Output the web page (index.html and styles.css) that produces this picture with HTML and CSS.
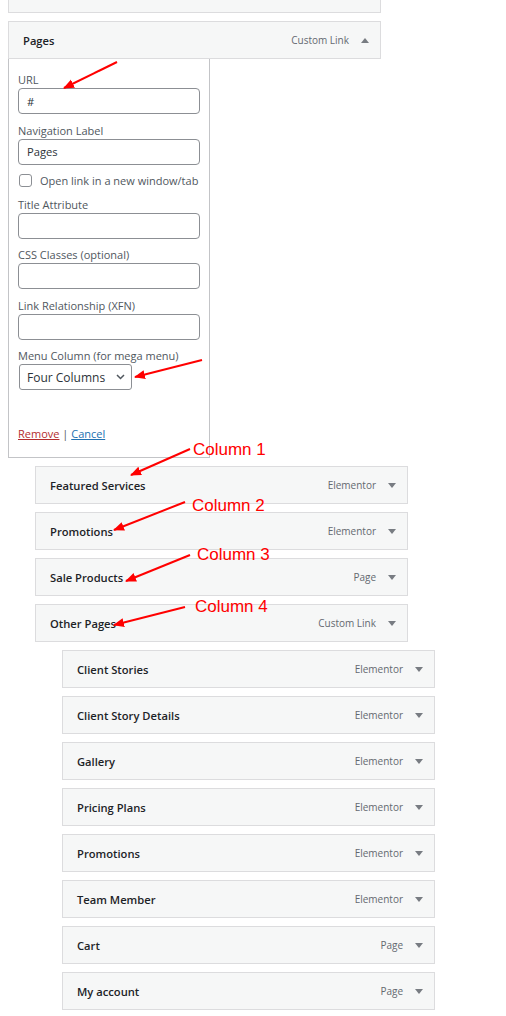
FILE: index.html
```html
<!DOCTYPE html>
<html lang="en">
<head>
  <meta charset="UTF-8">
  <meta name="viewport" content="width=device-width, initial-scale=1.0">
  <title>Menu Structure</title>
  <link rel="stylesheet" href="styles.css">
</head>
<body>

  <ul class="menu">
    <!-- bottom of the item above, scrolled out of view -->
    <li class="item cut"><div class="handle"></div></li>

    <!-- open item with its settings -->
    <li class="item">
      <div class="handle">
        <span class="title">Pages</span>
        <span class="controls">
          <span class="type">Custom Link</span>
          <svg class="toggle" width="8" height="5" viewBox="0 0 8 5"><path d="M0 5h8L4 0z"/></svg>
        </span>
      </div>
      <div class="settings">
        <div class="field">
          <label for="url">URL</label>
          <input type="text" id="url" value="#">
        </div>
        <div class="field">
          <label for="navLabel">Navigation Label</label>
          <input type="text" id="navLabel" value="Pages">
        </div>
        <label class="check"><input type="checkbox"> Open link in a new window/tab</label>
        <div class="field after-check">
          <label for="titleAttr">Title Attribute</label>
          <input type="text" id="titleAttr">
        </div>
        <div class="field">
          <label for="cssClasses">CSS Classes (optional)</label>
          <input type="text" id="cssClasses">
        </div>
        <div class="field">
          <label for="xfn">Link Relationship (XFN)</label>
          <input type="text" id="xfn">
        </div>
        <div class="field">
          <label for="megaCol">Menu Column (for mega menu)</label>
          <span class="select-wrap">
            <select id="megaCol">
              <option>Four Columns</option>
            </select>
            <svg class="chevron" width="9" height="6" viewBox="0 0 9 6"><path d="M1 1l3.5 3.5L8 1"/></svg>
          </span>
        </div>
        <div class="actions">
          <a href="#" class="remove">Remove</a> <span class="sep">|</span> <a href="#" class="cancel">Cancel</a>
        </div>
      </div>
    </li>

    <li class="item depth-1">
      <div class="handle"><span class="title">Featured Services</span><span class="controls"><span class="type">Elementor</span><svg class="toggle" width="8" height="5" viewBox="0 0 8 5"><path d="M0 0h8L4 5z"/></svg></span></div>
    </li>
    <li class="item depth-1">
      <div class="handle"><span class="title">Promotions</span><span class="controls"><span class="type">Elementor</span><svg class="toggle" width="8" height="5" viewBox="0 0 8 5"><path d="M0 0h8L4 5z"/></svg></span></div>
    </li>
    <li class="item depth-1">
      <div class="handle"><span class="title">Sale Products</span><span class="controls"><span class="type">Page</span><svg class="toggle" width="8" height="5" viewBox="0 0 8 5"><path d="M0 0h8L4 5z"/></svg></span></div>
    </li>
    <li class="item depth-1">
      <div class="handle"><span class="title">Other Pages</span><span class="controls"><span class="type">Custom Link</span><svg class="toggle" width="8" height="5" viewBox="0 0 8 5"><path d="M0 0h8L4 5z"/></svg></span></div>
    </li>

    <li class="item depth-2">
      <div class="handle"><span class="title">Client Stories</span><span class="controls"><span class="type">Elementor</span><svg class="toggle" width="8" height="5" viewBox="0 0 8 5"><path d="M0 0h8L4 5z"/></svg></span></div>
    </li>
    <li class="item depth-2">
      <div class="handle"><span class="title">Client Story Details</span><span class="controls"><span class="type">Elementor</span><svg class="toggle" width="8" height="5" viewBox="0 0 8 5"><path d="M0 0h8L4 5z"/></svg></span></div>
    </li>
    <li class="item depth-2">
      <div class="handle"><span class="title">Gallery</span><span class="controls"><span class="type">Elementor</span><svg class="toggle" width="8" height="5" viewBox="0 0 8 5"><path d="M0 0h8L4 5z"/></svg></span></div>
    </li>
    <li class="item depth-2">
      <div class="handle"><span class="title">Pricing Plans</span><span class="controls"><span class="type">Elementor</span><svg class="toggle" width="8" height="5" viewBox="0 0 8 5"><path d="M0 0h8L4 5z"/></svg></span></div>
    </li>
    <li class="item depth-2">
      <div class="handle"><span class="title">Promotions</span><span class="controls"><span class="type">Elementor</span><svg class="toggle" width="8" height="5" viewBox="0 0 8 5"><path d="M0 0h8L4 5z"/></svg></span></div>
    </li>
    <li class="item depth-2">
      <div class="handle"><span class="title">Team Member</span><span class="controls"><span class="type">Elementor</span><svg class="toggle" width="8" height="5" viewBox="0 0 8 5"><path d="M0 0h8L4 5z"/></svg></span></div>
    </li>
    <li class="item depth-2">
      <div class="handle"><span class="title">Cart</span><span class="controls"><span class="type">Page</span><svg class="toggle" width="8" height="5" viewBox="0 0 8 5"><path d="M0 0h8L4 5z"/></svg></span></div>
    </li>
    <li class="item depth-2">
      <div class="handle"><span class="title">My account</span><span class="controls"><span class="type">Page</span><svg class="toggle" width="8" height="5" viewBox="0 0 8 5"><path d="M0 0h8L4 5z"/></svg></span></div>
    </li>
  </ul>

  <!-- red annotations drawn over the screenshot -->
  <svg class="arrows" width="506" height="1016" viewBox="0 0 506 1016">
    <defs>
      <marker id="head" markerWidth="12" markerHeight="10" refX="10" refY="4.5" orient="auto" markerUnits="userSpaceOnUse">
        <path d="M0 0L11 4.5L0 9z" fill="#f00"/>
      </marker>
    </defs>
    <line x1="117" y1="62" x2="64" y2="88" marker-end="url(#head)"/>
    <line x1="202" y1="360" x2="135" y2="377" marker-end="url(#head)"/>
    <line x1="190" y1="449" x2="131" y2="475" marker-end="url(#head)"/>
    <line x1="185" y1="502" x2="114" y2="530" marker-end="url(#head)"/>
    <line x1="190" y1="555" x2="126" y2="581" marker-end="url(#head)"/>
    <line x1="185" y1="607" x2="114" y2="625" marker-end="url(#head)"/>
  </svg>
  <span class="note n1">Column 1</span>
  <span class="note n2">Column 2</span>
  <span class="note n3">Column 3</span>
  <span class="note n4">Column 4</span>

</body>
</html>
```

FILE: styles.css
```css
* { box-sizing: border-box; }
body { margin: 0; background: #fff; font-family: "Open Sans", "Noto Sans", sans-serif; color: #1d2327; }

.menu { list-style: none; margin: 0; padding: 0 0 0 8px; }
.item { width: 373px; margin-top: 8px; }
.item.cut { margin-top: 0; }
.item.depth-1 { margin-left: 27px; }
.item.depth-2 { margin-left: 54px; }

.handle { display: flex; align-items: center; justify-content: space-between; height: 38px; padding: 0 5px 0 14px; background: #f6f7f7; border: 1px solid #dcdcde; }
.cut .handle { height: 13px; border-top: 0; }
.title { font-size: 11.2px; font-weight: 600; color: #1d2327; }
.controls { display: flex; align-items: center; }
.type { font-size: 10px; color: #646970; margin-right: 6px; }
.toggle { width: 20px; height: 5px; fill: #787c82; overflow: visible; }

.settings { width: 202px; padding: 10px 9px 14px; border: 1px solid #c3c4c7; border-top: 0; }
.field + .field { margin-top: 5.5px; }
.field.after-check { margin-top: 3px; }
.field label { display: block; font-size: 11px; line-height: 14px; padding-top: 4px; margin-bottom: 1px; color: #50575e; }
.field input { display: block; width: 100%; height: 26px; padding: 0 8px; font: 11.2px "Open Sans", sans-serif; color: #2c3338; border: 1px solid #8c8f94; border-radius: 4px; background: #fff; }

.check { display: flex; align-items: center; height: 20px; margin-top: 6px; font-size: 11px; color: #50575e; }
.check input { appearance: none; width: 13px; height: 13px; margin: 0 8px 0 1px; border: 1px solid #8c8f94; border-radius: 3px; background: #fff; }

.select-wrap { position: relative; display: inline-block; margin-left: 1px; }
.select-wrap select { appearance: none; width: 113px; height: 26px; padding: 0 20px 0 7px; font: 12px "Open Sans", sans-serif; color: #2c3338; border: 1px solid #8c8f94; border-radius: 3px; background: #fff; }
.chevron { position: absolute; right: 7px; top: 10px; fill: none; stroke: #50575e; stroke-width: 1.5; }

.actions { margin-top: 35px; font-size: 11px; line-height: 18px; color: #50575e; }
.actions a { text-decoration: underline; }
.remove { color: #b32d2e; }
.cancel { color: #2271b1; }

.arrows { position: absolute; top: 0; left: 0; pointer-events: none; }
.arrows line { stroke: #f00; stroke-width: 2; }
.note { position: absolute; font: 17px/17px "Liberation Sans", Arial, sans-serif; color: #f00; }
.n1 { left: 193px; top: 441px; }
.n2 { left: 192px; top: 497px; }
.n3 { left: 197px; top: 546px; }
.n4 { left: 195px; top: 598px; }
```
